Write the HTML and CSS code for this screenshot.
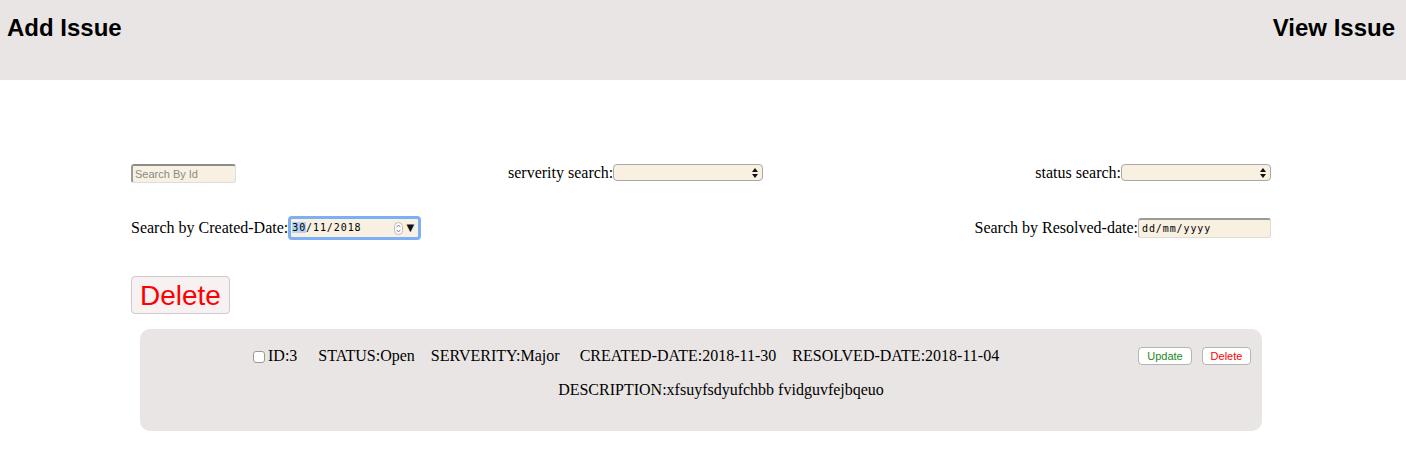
FILE: index.html
```html
<!DOCTYPE html>
<html>
<head>
<meta charset="utf-8">
<link rel="stylesheet" href="styles.css">
</head>
<body>
<header class="topbar">
  <h2 class="nav-title">Add Issue</h2>
  <h2 class="nav-title">View Issue</h2>
</header>
<main class="container">
  <div class="search-row first">
    <input class="id-input" type="text" placeholder="Search By Id">
    <label class="field">serverity search:<span class="select-wrap"><select class="select"></select><svg class="select-arrows" width="6" height="10" viewBox="0 0 6 10"><path d="M0 4 L3 0 L6 4 Z M0 6 L6 6 L3 10 Z" fill="#111"/></svg></span></label>
    <label class="field">status search:<span class="select-wrap"><select class="select"></select><svg class="select-arrows" width="6" height="10" viewBox="0 0 6 10"><path d="M0 4 L3 0 L6 4 Z M0 6 L6 6 L3 10 Z" fill="#111"/></svg></span></label>
  </div>
  <div class="search-row second">
    <label class="field">Search by Created-Date:<span class="date focused"><span class="date-text"><span class="sel">30</span>/11/2018</span><span class="spin"><svg width="9" height="13" viewBox="0 0 9 13"><rect x="0.5" y="0.5" width="8" height="12" rx="4" fill="#fff" stroke="#bbb"/><path d="M2.6 5.2 L4.5 3 L6.4 5.2 M2.6 7.8 L4.5 10 L6.4 7.8" fill="none" stroke="#777" stroke-width="0.9"/></svg></span><span class="drop">▼</span></span></label>
    <label class="field">Search by Resolved-date:<span class="date plain"><span class="date-text">dd/mm/yyyy</span></span></label>
  </div>
  <button class="big-delete">Delete</button>
  <div class="card">
    <div class="card-row">
      <div class="info">
        <input class="check" type="checkbox">
        <span class="item">ID:3</span>
        <span class="item">STATUS:Open</span>
        <span class="item">SERVERITY:Major</span>
        <span class="item">CREATED-DATE:2018-11-30</span>
        <span class="item">RESOLVED-DATE:2018-11-04</span>
      </div>
      <div class="actions">
        <button class="small-btn update">Update</button>
        <button class="small-btn remove">Delete</button>
      </div>
    </div>
    <div class="desc">DESCRIPTION:xfsuyfsdyufchbb fvidguvfejbqeuo</div>
  </div>
</main>
</body>
</html>
```
FILE: styles.css
```css
* { box-sizing: border-box; }
body {
  margin: 0;
  font-family: "Liberation Serif", "Times New Roman", serif;
  font-size: 16px;
  color: #000;
  background: #fff;
}
.topbar {
  height: 80px;
  background: #e9e5e4;
  display: flex;
  justify-content: space-between;
  align-items: flex-start;
  padding: 0 11px 0 7px;
}
.nav-title {
  margin: 14px 0 0;
  font-family: "Liberation Sans", Arial, sans-serif;
  font-weight: bold;
  font-size: 24px;
  line-height: 28px;
}
.container {
  width: 1140px;
  margin-left: 131px;
}
.search-row {
  display: flex;
  justify-content: space-between;
  align-items: center;
}
.search-row.first {
  margin-top: 83px;
  height: 20px;
}
.search-row.second {
  margin-top: 33px;
  height: 24px;
}
.field {
  display: flex;
  align-items: center;
  line-height: 18px;
}
.search-row.first .field {
  line-height: 16px;
  padding-bottom: 1px;
}
.id-input {
  width: 105px;
  height: 19px;
  margin: 0;
  background: #f8f0e1;
  border: 1px solid #ddd;
  border-top: 2px solid #8c8c8c;
  border-left: 2px solid #9a9a9a;
  border-radius: 3px;
  padding: 0 0 0 2px;
  font-family: "Liberation Sans", Arial, sans-serif;
  font-size: 11px;
  outline: none;
}
.id-input::placeholder { color: #8a8a8a; }
.select-wrap {
  position: relative;
  display: inline-block;
  width: 150px;
  height: 17px;
}
.select {
  appearance: none;
  -webkit-appearance: none;
  display: block;
  width: 150px;
  height: 17px;
  margin: 0;
  background: #f8f0e1;
  border: 1px solid #a8a8a8;
  border-radius: 4px;
}
.select-arrows {
  position: absolute;
  right: 5px;
  top: 4px;
  pointer-events: none;
}
.date {
  display: flex;
  align-items: center;
  width: 133px;
  font-family: "DejaVu Sans Mono", monospace;
  font-size: 10px;
  letter-spacing: 0.9px;
  background: #f8f0e1;
}
.date.focused {
  height: 24px;
  border: 3px solid #7eaef4;
  border-radius: 4px;
  padding-left: 1px;
}
.date.plain {
  height: 20px;
  border: 1px solid #e0dcd4;
  border-top: 2px solid #9a9a9a;
  border-left: 1px solid #b5b5b5;
  border-radius: 3px;
  padding-left: 3px;
}
.date-text { flex: 1; }
.sel { background: #b3d2f5; }
.spin {
  display: flex;
  margin-right: 4px;
}
.drop {
  font-family: "DejaVu Sans", sans-serif;
  font-size: 10px;
  letter-spacing: 0;
  margin-right: 4px;
  color: #111;
}
.big-delete {
  display: block;
  margin-top: 36px;
  height: 38px;
  padding: 2px 8px 0;
  background: #f7f1f1;
  border: 1px solid #cfcaca;
  border-radius: 4px;
  color: #ff0000;
  font-family: "Liberation Sans", Arial, sans-serif;
  font-size: 28px;
  line-height: 32px;
}
.card {
  margin: 15px 9px 0;
  height: 102px;
  background: #e9e5e4;
  border-radius: 10px;
  padding: 18px 11px 0;
}
.card-row {
  display: flex;
  align-items: center;
  height: 18px;
}
.info {
  flex: 1;
  display: flex;
  align-items: center;
  padding-left: 102px;
  line-height: 18px;
}
.check {
  appearance: none;
  -webkit-appearance: none;
  width: 12px;
  height: 12px;
  margin: 1px 3px 0 0;
  background: #fff;
  border: 1px solid #9a9a9a;
  border-radius: 3px;
}
.item:nth-of-type(2) { margin-left: 21px; }
.item:nth-of-type(3) { margin-left: 16px; }
.item:nth-of-type(4) { margin-left: 20px; }
.item:nth-of-type(5) { margin-left: 16px; }
.actions {
  display: flex;
  gap: 10px;
}
.small-btn {
  height: 18px;
  padding: 0 6px;
  background: #fff;
  border: 1px solid #b5b5b5;
  border-radius: 4px;
  font-family: "Liberation Sans", Arial, sans-serif;
  font-size: 11px;
  line-height: 16px;
}
.small-btn.update { width: 54px; color: #1c8a1c; }
.small-btn.remove { width: 49px; color: #ff0000; }
.desc {
  margin-top: 16px;
  line-height: 18px;
  text-align: center;
  padding-left: 40px;
}
```
